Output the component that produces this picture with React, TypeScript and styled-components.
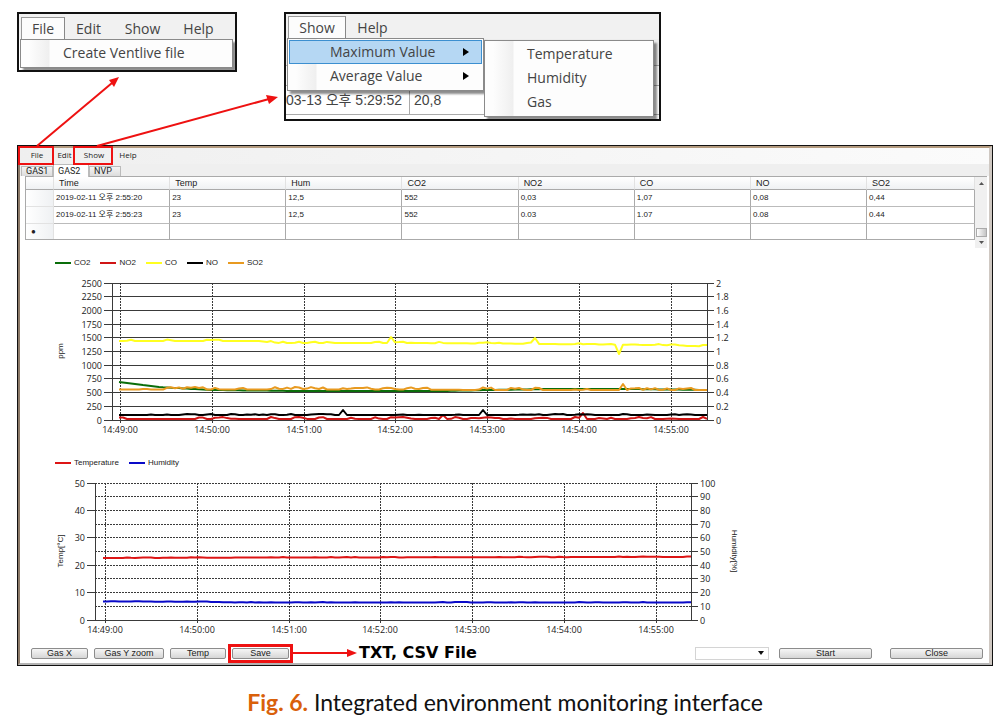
import React from "react";
import styled, { createGlobalStyle, css } from "styled-components";

const GlobalStyle = createGlobalStyle`
  *, *::before, *::after { box-sizing: border-box; }
  body { margin: 0; background: #fff; color: #222; font-family: "Liberation Sans", "Noto Sans CJK KR", sans-serif; }
  button, select { font-family: inherit; color: inherit; margin: 0; }
`;

const red = "#ee1111";
const humanist = `"Open Sans", "Noto Sans", sans-serif`;

/* ---------- page ---------- */

const Figure = styled.figure`
  margin: 0;
  padding: 0 13px 0 17px;
  min-width: 900px;
`;

const Callouts = styled.section`
  position: relative;
  display: flex;
  align-items: flex-start;
  gap: 47px;
  padding: 12px 0 24px;
`;

const PointerLayer = styled.svg`
  position: absolute;
  left: 0;
  top: 0;
  overflow: visible;
  pointer-events: none;
`;

const Callout = styled.div<{ $width: number }>`
  width: ${(p) => p.$width}px;
  border: 2px solid #111;
  background: #fff;
  font-family: ${humanist};
  font-size: 14px;
  color: #444;
  overflow: hidden;
`;

const CalloutBar = styled.div<{ $top: number }>`
  display: flex;
  align-items: flex-end;
  padding: ${(p) => p.$top}px 0 0 2px;
  background: #f1f1f1;
`;

const CalloutItem = styled.button<{ $width: number; $open?: boolean }>`
  width: ${(p) => p.$width}px;
  height: 23px;
  padding: 0;
  border: 1px solid transparent;
  background: none;
  font-size: 14px;
  line-height: 20px;
  ${(p) =>
    p.$open &&
    css`
      border-color: #999 #888 transparent #999;
      background: #fcfcfc;
    `}
`;

const CalloutBody = styled.div<{ $height: number }>`
  position: relative;
  height: ${(p) => p.$height}px;
`;

const Menu = styled.div<{ $x: number; $y: number; $width: number }>`
  position: absolute;
  left: ${(p) => p.$x}px;
  top: ${(p) => p.$y}px;
  width: ${(p) => p.$width}px;
  padding: 1px 1px 2px;
  border: 1px solid #8a8a8a;
  background: linear-gradient(90deg, #fdfdfd 8px, #efefef 28px, #fdfdfd 29px);
  box-shadow: 3px 3px 2px rgba(0, 0, 0, 0.45);
`;

const MenuEntry = styled.button<{ $active?: boolean }>`
  display: flex;
  align-items: center;
  justify-content: space-between;
  width: 100%;
  height: 24px;
  padding: 0 12px 0 40px;
  border: 1px solid ${(p) => (p.$active ? "#3c8fd0" : "transparent")};
  background: ${(p) => (p.$active ? "#b5d7f3" : "none")};
  font-size: 14px;
  line-height: 20px;
  text-align: left;
`;

const Band = styled.div<{ $height: number; $fill?: string }>`
  display: flex;
  height: ${(p) => p.$height}px;
  background: ${(p) => p.$fill || "#fff"};
  border-bottom: 1px solid #aaa;
`;

const BandCell = styled.div<{ $width: number }>`
  width: ${(p) => p.$width}px;
  border-right: 1px solid #aaa;
  padding-left: 4px;
  white-space: nowrap;
  font: 14px/28px "Liberation Sans", "Noto Sans CJK KR", sans-serif;
  &:first-child {
    padding-left: 0;
  }
`;

/* ---------- window ---------- */

const Window = styled.section`
  border: 1px solid #111;
  background: #fff;
`;

const WindowInner = styled.div`
  border-style: solid;
  border-width: 2px 3px 2px 2px;
  border-color: #b39a7e #cfc8c2 #b4b4b4 #8c7a68;
`;

const highlight = css`
  position: relative;
  &::after {
    content: "";
    position: absolute;
    border: 3px solid ${red};
    pointer-events: none;
  }
`;

const MenuBar = styled.nav`
  display: flex;
  height: 16px;
  background: linear-gradient(90deg, #efefef, #fbfbfb);
`;

const MenuItem = styled.button<{ $width: number; $marked?: boolean }>`
  width: ${(p) => p.$width}px;
  height: 16px;
  padding: 0 0 2px;
  border: 0;
  background: none;
  font: 8px/12px ${humanist};
  ${(p) =>
    p.$marked &&
    css`
      ${highlight}
      &::after {
        inset: -2px 0 -1px -2px;
        border-width: 2px;
      }
    `}
`;

const Tabs = styled.div`
  display: flex;
  align-items: flex-end;
  height: 12px;
  padding-left: 1px;
  background: #efefef;
`;

const Tab = styled.button<{ $active?: boolean }>`
  width: ${(p) => (p.$active ? 36 : 32)}px;
  height: ${(p) => (p.$active ? 13 : 10)}px;
  margin-bottom: ${(p) => (p.$active ? -1 : 0)}px;
  padding: 0 4px;
  border: 1px solid #bbb;
  border-bottom: 0;
  background: ${(p) => (p.$active ? "#fff" : "linear-gradient(#f4f4f4, #dcdcdc)")};
  font: 9px/9px Roboto, sans-serif;
  text-align: left;
`;

const GridArea = styled.div`
  display: flex;
  align-items: flex-start;
  margin: 0 2px 0 5px;
  border-top: 1px solid #aaa;
`;

const Grid = styled.table`
  flex: 1;
  width: 100%;
  table-layout: fixed;
  border-collapse: separate;
  border-spacing: 0;
  border-left: 1px solid #aaa;
  border-bottom: 1px solid #aaa;
`;

const HeadCell = styled.th<{ $width?: string }>`
  width: ${(p) => p.$width || "auto"};
  height: 13px;
  padding: 0 5px;
  border-right: 1px solid #e2e2e2;
  border-bottom: 1px solid #aaa;
  background: linear-gradient(#fff, #eff1f3);
  font-size: 9px;
  line-height: 11px;
  font-weight: 400;
  text-align: left;
`;

const Cell = styled.td`
  height: 17px;
  padding: 0 2px;
  border-right: 1px solid #aaa;
  border-bottom: 1px solid #bbb;
  font-size: 8px;
  line-height: 14px;
  white-space: nowrap;
  tr:last-child & {
    height: 15px;
    border-bottom: 0;
  }
`;

const RowHead = styled(Cell)`
  padding-left: 5px;
  background: linear-gradient(90deg, #fff, #eff1f3);
  border-color: #e2e2e2;
`;

const ScrollBar = styled.div`
  display: flex;
  flex-direction: column;
  align-items: center;
  justify-content: space-between;
  width: 12px;
  height: 71px;
  padding: 5px 0 4px;
  background: #f0f0f0;
`;

const Thumb = styled.div`
  width: 11px;
  height: 9px;
  margin-top: 38px;
  border: 1px solid #aaa;
  background: linear-gradient(90deg, #fff, #c4c4c4);
`;

const Panel = styled.section<{ $gap: number }>`
  padding: ${(p) => p.$gap}px 0 0 30px;
`;

const Legend = styled.ul`
  display: flex;
  gap: 10px;
  margin: 0 0 7px;
  padding: 0 0 0 5px;
  list-style: none;
  font-size: 8px;
  line-height: 10px;
`;

const LegendItem = styled.li<{ $color: string }>`
  display: flex;
  align-items: center;
  gap: 3px;
  &::before {
    content: "";
    width: 16px;
    height: 2px;
    background: ${(p) => p.$color};
  }
`;

const Plot = styled.svg`
  display: block;
  text {
    font-family: ${humanist};
    font-size: 9px;
    fill: #222;
  }
  .axis-title {
    font-family: "Liberation Sans", sans-serif;
    font-size: 8px;
  }
`;

const Footer = styled.footer`
  display: flex;
  align-items: center;
  gap: 6px;
  height: 20px;
  margin-top: 3px;
  padding: 0 6px 0 11px;
`;

const PushButton = styled.button<{ $width: number }>`
  width: ${(p) => p.$width}px;
  height: 11px;
  padding: 0;
  border: 1px solid #8c8c8c;
  border-radius: 2px;
  background: linear-gradient(#f6f6f6, #d6d6d6);
  font-size: 9px;
  line-height: 9px;
`;

const SaveMark = styled.div`
  display: flex;
  ${highlight}
  &::after {
    inset: -4px;
  }
`;

const Note = styled.div`
  display: flex;
  align-items: center;
  gap: 2px;
  margin-left: -2px;
  font: 700 16px/20px "DejaVu Sans", sans-serif;
  color: #000;
`;

const FooterEnd = styled.div`
  display: flex;
  align-items: center;
  gap: 10px;
  margin-left: auto;
`;

const SelectBox = styled.div`
  display: flex;
  align-items: center;
  width: 74px;
  height: 13px;
  padding-right: 4px;
  border: 1px solid #d4d4d4;
`;

const PortSelect = styled.select`
  flex: 1;
  height: 11px;
  border: 0;
  background: none;
  appearance: none;
  font-size: 8px;
`;

const CloseWrap = styled.div`
  display: flex;
  margin-left: 8px;
`;

const Caption = styled.figcaption`
  margin-top: 20px;
  font: 23px/32px Lato, sans-serif;
  text-align: center;
  color: #111;
  b {
    color: #d9600a;
  }
`;

/* ---------- charts ---------- */

type Point = [number, number];

const noise = (i: number, seed: number) => {
  const v = Math.sin(i * 12.9898 + seed * 78.233) * 43758.5453;
  return v - Math.floor(v);
};

/* Interpolates between anchors, adds small sensor ripple, then single peaks. */
function trace(anchors: Point[], ripple: number, seed: number, peaks: Point[] = []) {
  const start = anchors[0][0];
  const end = anchors[anchors.length - 1][0];
  const points: Point[] = [];
  const step = 4;
  for (let i = 0; start + i * step <= end; i++) {
    const x = start + i * step;
    const k = Math.max(1, anchors.findIndex((a) => a[0] >= x));
    const [x0, y0] = anchors[k - 1];
    const [x1, y1] = anchors[k];
    let y = y0 + ((x - x0) / (x1 - x0)) * (y1 - y0);
    if (noise(Math.floor(i / 2), seed) > 0.6) y -= ripple * noise(i, seed + 1);
    const peak = peaks.find((p) => x - p[0] > -2 && x - p[0] <= 2);
    if (peak) y = peak[1];
    points.push([x, y]);
  }
  return points.map(([x, y]) => `${x},${y.toFixed(1)}`).join(" ");
}

interface Series {
  name: string;
  color: string;
  points: string;
}

interface ChartProps {
  label: string;
  gap: number;
  left: number;
  right: number;
  firstTick: number;
  leftLabels: string[];
  rightLabels: string[];
  dashed?: boolean;
  leftTitle: string;
  rightTitle?: string;
  series: Series[];
}

const TOP = 8;
const HEIGHT = 137;
const times = ["14:49:00", "14:50:00", "14:51:00", "14:52:00", "14:53:00", "14:54:00", "14:55:00"];

function Chart(p: ChartProps) {
  const bottom = TOP + HEIGHT;
  const rows = Array.from({ length: 11 }, (_, i) => Math.floor(TOP + (i * HEIGHT) / 10) + 0.5);
  return (
    <Panel $gap={p.gap}>
      <Legend>
        {p.series.map((s) => (
          <LegendItem key={s.name} $color={s.color}>
            {s.name}
          </LegendItem>
        ))}
      </Legend>
      <Plot width="700" height="165" viewBox="0 0 700 165" role="img" aria-label={p.label}>
        <g stroke="#3a3a3a" strokeWidth="1">
          {rows.map((y, i) => (
            <line
              key={y}
              x1={p.left}
              x2={p.right}
              y1={y}
              y2={y}
              strokeDasharray={p.dashed && i < 10 ? "2 1" : undefined}
            />
          ))}
          {times.map((t, i) => {
            const x = Math.round(p.firstTick + i * 91.8) + 0.5;
            return (
              <g key={t}>
                <line x1={x} x2={x} y1={TOP} y2={bottom} strokeDasharray="2 1" />
                <line x1={x} x2={x} y1={bottom} y2={bottom + 3} />
              </g>
            );
          })}
          <line x1={p.left + 0.5} x2={p.left + 0.5} y1={TOP} y2={bottom + 1} />
          <line x1={p.right + 0.5} x2={p.right + 0.5} y1={TOP} y2={bottom + 1} />
          {p.leftLabels.map((t, i) => {
            const y = rows[(i * 10) / (p.leftLabels.length - 1)];
            return <line key={t} x1={p.left - 8} x2={p.left} y1={y} y2={y} />;
          })}
          {rows.map((y) => (
            <line key={y} x1={p.right} x2={p.right + 7} y1={y} y2={y} />
          ))}
        </g>
        {p.leftLabels.map((t, i) => (
          <text key={t} x={p.left - 10} y={rows[(i * 10) / (p.leftLabels.length - 1)] + 3} textAnchor="end">
            {t}
          </text>
        ))}
        {p.rightLabels.map((t, i) => (
          <text key={t} x={p.right + 9} y={rows[i] + 3}>
            {t}
          </text>
        ))}
        {times.map((t, i) => (
          <text key={t} x={Math.round(p.firstTick + i * 91.8)} y={bottom + 13} textAnchor="middle">
            {t}
          </text>
        ))}
        <text className="axis-title" textAnchor="middle" transform="translate(13 76) rotate(-90)">
          {p.leftTitle}
        </text>
        {p.rightTitle && (
          <text className="axis-title" textAnchor="middle" transform="translate(682 76) rotate(90)">
            {p.rightTitle}
          </text>
        )}
        {p.series.map((s) => (
          <polyline
            key={s.name}
            points={s.points}
            fill="none"
            stroke={s.color}
            strokeWidth="2"
            strokeLinejoin="round"
          />
        ))}
      </Plot>
    </Panel>
  );
}

const gasSeries: Series[] = [
  {
    name: "CO2",
    color: "#0a6e0a",
    points: trace([[69, 107], [85, 109], [110, 112], [160, 115], [250, 116], [390, 116], [440, 115], [500, 114], [580, 114], [657, 115]], 0, 1),
  },
  { name: "NO2", color: "#d01515", points: trace([[69, 144], [657, 144]], 2, 9, [[393, 140], [533, 138]]) },
  {
    name: "CO",
    color: "#ffff20",
    points: trace(
      [[69, 66], [210, 66], [225, 68], [350, 68], [450, 68.5], [540, 69.5], [610, 70], [657, 71.5]],
      1.5,
      4,
      [[341, 62], [483, 63], [570, 79]],
    ),
  },
  { name: "NO", color: "#000000", points: trace([[69, 140], [657, 140]], 1, 7, [[291, 135], [432, 135]]) },
  { name: "SO2", color: "#e89a20", points: trace([[69, 114.5], [340, 114.5], [440, 115], [657, 115]], 2.5, 5, [[573, 109]]) },
];

const climateSeries: Series[] = [
  { name: "Temperature", color: "#dd1515", points: trace([[53, 83], [240, 82.5], [641, 82]], 0.5, 3) },
  { name: "Humidity", color: "#0a0ac8", points: trace([[53, 126.5], [150, 126.8], [190, 127.5], [641, 127.5]], 0.4, 6) },
];

/* ---------- table data ---------- */

const columns = ["Time", "Temp", "Hum", "CO2", "NO2", "CO", "NO", "SO2"];
const records = [
  ["2019-02-11 오후 2:55:20", "23", "12,5", "552", "0,03", "1,07", "0,08", "0,44"],
  ["2019-02-11 오후 2:55:23", "23", "12,5", "552", "0.03", "1.07", "0.08", "0.44"],
];

const SubmenuMark = () => (
  <svg width="6" height="8" viewBox="0 0 6 8" aria-hidden="true">
    <path d="M0 0L6 4L0 8Z" fill="#000" />
  </svg>
);

const ScrollMark = ({ d }: { d: string }) => (
  <svg width="5" height="3" viewBox="0 0 5 3" aria-hidden="true">
    <path d={d} fill="#555" />
  </svg>
);

export default function App() {
  return (
    <>
      <GlobalStyle />
      <Figure>
        <Callouts>
          <Callout $width={220}>
            <CalloutBar $top={3}>
              <CalloutItem $width={44} $open>File</CalloutItem>
              <CalloutItem $width={47}>Edit</CalloutItem>
              <CalloutItem $width={61}>Show</CalloutItem>
              <CalloutItem $width={51}>Help</CalloutItem>
            </CalloutBar>
            <CalloutBody $height={30}>
              <Menu $x={1} $y={-1} $width={213}>
                <MenuEntry>Create Ventlive file</MenuEntry>
              </Menu>
            </CalloutBody>
          </Callout>

          <Callout $width={377}>
            <CalloutBar $top={2}>
              <CalloutItem $width={58} $open>Show</CalloutItem>
              <CalloutItem $width={53}>Help</CalloutItem>
            </CalloutBar>
            <CalloutBody $height={80}>
              <Band $height={27} $fill="#ececec" />
              <Band $height={20} $fill="#f8f8f8" />
              <Band $height={29}>
                <BandCell $width={124}>03-13 오후 5:29:52</BandCell>
                <BandCell $width={164}>20,8</BandCell>
              </Band>
              <Menu $x={1} $y={-1} $width={197}>
                <MenuEntry $active>
                  Maximum Value <SubmenuMark />
                </MenuEntry>
                <MenuEntry>
                  Average Value <SubmenuMark />
                </MenuEntry>
              </Menu>
              <Menu $x={198} $y={1} $width={170}>
                <MenuEntry>Temperature</MenuEntry>
                <MenuEntry>Humidity</MenuEntry>
                <MenuEntry>Gas</MenuEntry>
              </Menu>
            </CalloutBody>
          </Callout>

          <PointerLayer width="300" height="150" viewBox="0 0 300 150" aria-hidden="true">
            <g stroke={red} strokeWidth="2" fill={red}>
              <path d="M20 146L95 83" />
              <path d="M80 146L252 99" />
              <path d="M102 77L92 80L97 87Z" strokeWidth="0" />
              <path d="M261 97L249 95L252 104Z" strokeWidth="0" />
            </g>
          </PointerLayer>
        </Callouts>

        <Window>
          <WindowInner>
            <MenuBar>
              <MenuItem $width={34} $marked>File</MenuItem>
              <MenuItem $width={21}>Edit</MenuItem>
              <MenuItem $width={38} $marked>Show</MenuItem>
              <MenuItem $width={30}>Help</MenuItem>
            </MenuBar>
            <Tabs>
              <Tab>GAS1</Tab>
              <Tab $active>GAS2</Tab>
              <Tab>NVP</Tab>
            </Tabs>

            <GridArea>
              <Grid>
                <thead>
                  <tr>
                    <HeadCell $width="28px" aria-label="Row" />
                    {columns.map((c, i) => (
                      <HeadCell key={c} scope="col" $width={i < 7 ? "12.24%" : undefined}>
                        {c}
                      </HeadCell>
                    ))}
                  </tr>
                </thead>
                <tbody>
                  {records.map((r) => (
                    <tr key={r[0]}>
                      <RowHead />
                      {r.map((v, i) => (
                        <Cell key={columns[i]}>{v}</Cell>
                      ))}
                    </tr>
                  ))}
                  <tr>
                    <RowHead>●</RowHead>
                    {columns.map((c) => (
                      <Cell key={c} />
                    ))}
                  </tr>
                </tbody>
              </Grid>
              <ScrollBar>
                <ScrollMark d="M0 3L2.500 0L5 3Z" />
                <Thumb />
                <ScrollMark d="M0 0L2.500 3L5 0Z" />
              </ScrollBar>
            </GridArea>

            <Chart
              label="Gas concentrations over time"
              gap={10}
              left={62}
              right={657}
              firstTick={70}
              leftLabels={["2500", "2250", "2000", "1750", "1500", "1250", "1000", "750", "500", "250", "0"]}
              rightLabels={["2", "1.8", "1.6", "1.4", "1.2", "1", "0.8", "0.6", "0.4", "0.2", "0"]}
              leftTitle="ppm"
              series={gasSeries}
            />
            <Chart
              label="Temperature and humidity over time"
              gap={18}
              left={45}
              right={641}
              firstTick={55}
              leftLabels={["50", "40", "30", "20", "10", "0"]}
              rightLabels={["100", "90", "80", "70", "60", "50", "40", "30", "20", "10", "0"]}
              dashed
              leftTitle="Temp[°C]"
              rightTitle="Humidity[%]"
              series={climateSeries}
            />

            <Footer>
              <PushButton $width={57}>Gas X</PushButton>
              <PushButton $width={70}>Gas Y zoom</PushButton>
              <PushButton $width={56}>Temp</PushButton>
              <SaveMark>
                <PushButton $width={57}>Save</PushButton>
              </SaveMark>
              <Note>
                <svg width="64" height="10" viewBox="0 0 64 10" aria-hidden="true">
                  <path d="M0 5H56" stroke={red} strokeWidth="2" />
                  <path d="M54 1L64 5L54 9Z" fill={red} />
                </svg>
                TXT, CSV File
              </Note>
              <FooterEnd>
                <SelectBox>
                  <PortSelect aria-label="Port" defaultValue="">
                    <option value="" />
                  </PortSelect>
                  <svg width="6" height="4" viewBox="0 0 6 4" aria-hidden="true">
                    <path d="M0 0H6L3 4Z" fill="#111" />
                  </svg>
                </SelectBox>
                <PushButton $width={93}>Start</PushButton>
                <CloseWrap>
                  <PushButton $width={93}>Close</PushButton>
                </CloseWrap>
              </FooterEnd>
            </Footer>
          </WindowInner>
        </Window>

        <Caption>
          <b>Fig. 6.</b> Integrated environment monitoring interface
        </Caption>
      </Figure>
    </>
  );
}
